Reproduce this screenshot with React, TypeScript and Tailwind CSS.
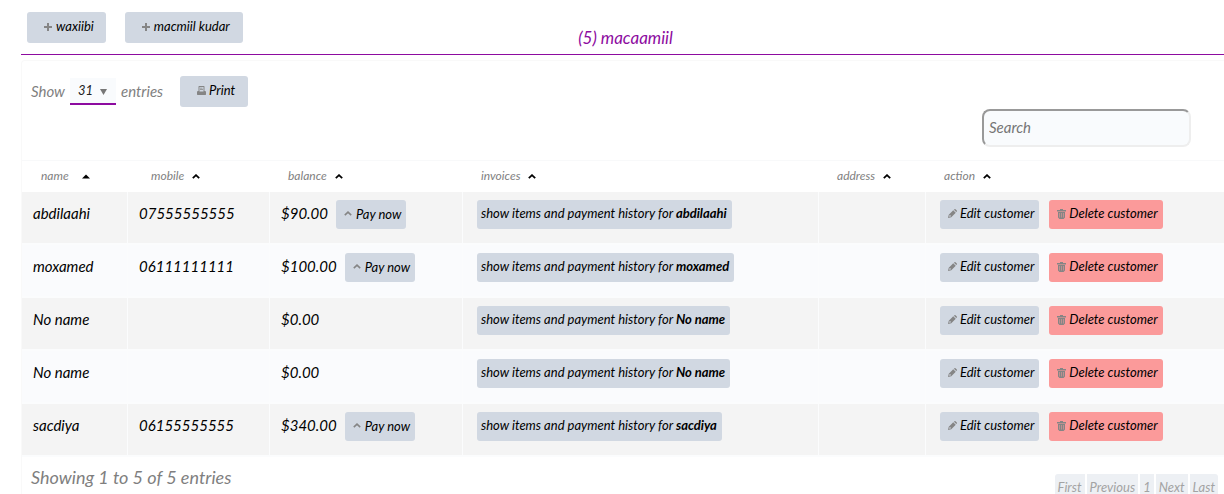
import React from "react";

type Customer = { name: string; mobile: string; balance: string; due: boolean };

const customers: Customer[] = [
  { name: "abdilaahi", mobile: "07555555555", balance: "$90.00", due: true },
  { name: "moxamed", mobile: "06111111111", balance: "$100.00", due: true },
  { name: "No name", mobile: "", balance: "$0.00", due: false },
  { name: "No name", mobile: "", balance: "$0.00", due: false },
  { name: "sacdiya", mobile: "06155555555", balance: "$340.00", due: true },
];

const columns = [
  { label: "name", width: "w-[106px]", gap: "gap-[13px]", pad: "pl-[19px]" },
  { label: "mobile", width: "w-[142px]", gap: "gap-2", pad: "pl-[23px]" },
  { label: "balance", width: "w-[193px]", gap: "gap-2", pad: "pl-[18px]" },
  { label: "invoices", width: "w-[356px]", gap: "gap-2", pad: "pl-[18px]" },
  { label: "address", width: "w-[107px]", gap: "gap-2", pad: "pl-[18px]" },
  { label: "action", width: "", gap: "gap-2", pad: "pl-[18px]" },
];

function PlusIcon() {
  return (
    <svg width="8" height="8" viewBox="0 0 8 8" fill="#858585" aria-hidden="true">
      <path d="M3 0h2v3h3v2H5v3H3V5H0V3h3z" />
    </svg>
  );
}

function PrintIcon() {
  return (
    <svg width="9" height="9" viewBox="0 0 18 18" fill="#858585" aria-hidden="true">
      <path fillRule="evenodd" d="M4 0h10l1 1v9h2l1 2v5l-1 1H1l-1-1v-5l1-2h2V1zM5 2v9h8V2z" />
      <path d="M6 3.500h5V5H6zM6 6.500h6V8H6z" />
    </svg>
  );
}

function PencilIcon() {
  return (
    <svg width="9" height="9" viewBox="0 0 18 18" fill="#858585" aria-hidden="true">
      <path fillRule="evenodd" d="M0 18l1.500-6.500L10.500 2.500l5 5L6.500 16.500zM2.800 12.800l-.5 2.900 2.900-.5L6 14l-2-2z" />
      <path d="M11.800 1.500L13 .4q1-.8 2 0L17.600 3q.8 1 0 2l-1.100 1.200z" />
    </svg>
  );
}

function TrashIcon() {
  return (
    <svg width="9" height="10" viewBox="0 0 18 20" fill="#858585" aria-hidden="true">
      <path d="M6 0h6v2h6v3H0V2h6z" />
      <path fillRule="evenodd" d="M2 6h14v11l-3 3H5l-3-3zM5 8v9h1V8zM8.500 8v9h1V8zM12 8v9h1V8z" />
    </svg>
  );
}

function CaretIcon({ filled = false, muted = false }: { filled?: boolean; muted?: boolean }) {
  return (
    <svg width="8" height="5" viewBox="0 0 8 5" className={muted ? "text-[#858585]" : "text-black"} aria-hidden="true">
      {filled ? (
        <path d="M0 4.500L4 .5l4 4z" fill="currentColor" />
      ) : (
        <path d="M.8 4.200L4 1.200l3.200 3" fill="none" stroke="currentColor" strokeWidth={muted ? 1.6 : 1.8} />
      )}
    </svg>
  );
}

function ToolButton({ icon, className, children }: { icon: React.ReactNode; className: string; children: React.ReactNode }) {
  return (
    <button type="button" className={`flex h-[31px] items-center rounded-[3px] bg-[#d1d8e2] pb-[2px] text-[13px] italic text-black ${className}`}>
      {icon}
      <span>{children}</span>
    </button>
  );
}

function CellButton({ icon, danger = false, children }: { icon?: React.ReactNode; danger?: boolean; children: React.ReactNode }) {
  return (
    <button
      type="button"
      className={`flex h-[29px] shrink-0 items-center rounded-[3px] pr-[5px] pb-[2px] text-[13px] italic whitespace-pre text-black ${danger ? "bg-[#fb9a9a]" : "bg-[#d1d8e2]"} ${icon ? "pl-2" : "pl-1"}`}
    >
      {icon}
      {children}
    </button>
  );
}

export default function App() {
  return (
    <div className="h-screen overflow-hidden bg-white pl-[21px] font-['Lato','Open_Sans',sans-serif] italic">
      <header className="flex h-[55px] border-b border-[#8d0ba0] pt-3 pl-[6px]">
        <div className="flex flex-1 gap-[19px]">
          <ToolButton icon={<PlusIcon />} className="gap-1 pr-3 pl-[17px]">waxiibi</ToolButton>
          <ToolButton icon={<PlusIcon />} className="gap-1 pr-[13px] pl-[17px]">macmiil kudar</ToolButton>
        </div>
        <h1 className="pt-[14px] text-[17px] leading-6 text-[#8d0ba0]">(5) macaamiil</h1>
        <div className="flex-1" />
      </header>

      <main className="mt-[5px] rounded-tl border-t border-l border-[#f9f9f9]">
        <div className="flex h-[99px] justify-between pr-[33px]">
          <div className="flex h-[46px] items-end pl-[9px]">
            <label className="flex h-[31px] items-center gap-[5px] text-[15px] text-[#7f7f7f]">
              Show
              <span className="relative flex h-[27px] items-center">
                <select className="h-[27px] w-[46px] appearance-none border-b-2 border-[#8d0ba0] bg-[#f9fbfd] pl-2 text-[13px] text-[#222] italic" defaultValue="31">
                  <option>31</option>
                  <option>50</option>
                </select>
                <svg width="7" height="6" viewBox="0 0 7 6" className="pointer-events-none absolute right-[9px]" aria-hidden="true">
                  <path d="M0 0h7L3.500 6z" fill="#777" />
                </svg>
              </span>
              entries
            </label>
            <ToolButton icon={<PrintIcon />} className="ml-[17px] gap-[3px] pr-[13px] pl-[17px]">Print</ToolButton>
          </div>
          <input
            type="search"
            aria-label="Search"
            placeholder="Search"
            className="mt-12 h-[38px] w-[209px] rounded-lg border-2 border-t-[#999] border-r-[#eee] border-b-[#eee] border-l-[#999] bg-[#f9fbfd] px-[5px] pb-[2px] text-[15px] italic placeholder:text-[#757575]"
          />
        </div>

        <table className="w-full table-fixed border-separate border-spacing-0">
          <thead>
            <tr className="h-8">
              {columns.map((c, i) => (
                <th key={c.label} scope="col" className={`${c.width} ${c.pad} border-t border-[#f8f9fa] p-0 pb-px text-left text-xs font-normal text-[#7f7f7f]`}>
                  <span className={`flex items-center ${c.gap}`}>
                    {c.label}
                    <CaretIcon filled={i === 0} />
                  </span>
                </th>
              ))}
            </tr>
          </thead>
          <tbody className="text-[15px] text-black">
            {customers.map((c, i) => (
              <tr key={i} className="h-[53px] bg-[#fafbfd] odd:bg-[#f4f4f4] [&>td]:border-r [&>td]:border-b-2 [&>td]:border-[#fbfcfd] [&>td]:p-0 [&>td]:pt-2 [&>td]:pl-[11px] [&>td]:align-top [&>td:last-child]:border-r-0 [&>td:nth-child(n+4)]:pl-[14px]">
                <td className="leading-[26px]">{c.name}</td>
                <td className="leading-[26px]">{c.mobile}</td>
                <td className="leading-[26px]">
                  <div className="flex items-start gap-2">
                    {c.balance}
                    {c.due && <CellButton icon={<span className="mr-1 flex"><CaretIcon muted /></span>}>Pay now</CellButton>}
                  </div>
                </td>
                <td>
                  <CellButton>show items and payment history for <b>{c.name}</b></CellButton>
                </td>
                <td />
                <td>
                  <div className="flex gap-[10px]">
                    <CellButton icon={<span className="mr-[3px] flex"><PencilIcon /></span>}>Edit customer</CellButton>
                    <CellButton danger icon={<span className="mr-[3px] flex"><TrashIcon /></span>}>Delete customer</CellButton>
                  </div>
                </td>
              </tr>
            ))}
          </tbody>
        </table>

        <footer className="flex items-start justify-between pr-[6px] pl-[9px]">
          <p className="pt-2 text-lg leading-6 text-[#7f7f7f]">Showing 1 to 5 of 5 entries</p>
          <nav aria-label="Pages" className="mt-[17px] flex gap-[2px] overflow-hidden rounded-t-[3px]">
            {["First", "Previous", "1", "Next", "Last"].map((label) => (
              <button key={label} type="button" className="h-[26px] bg-[#edf0f4] px-[3px] text-[13px] leading-none text-[#a3a3a3] italic">
                {label}
              </button>
            ))}
          </nav>
        </footer>
      </main>
    </div>
  );
}
